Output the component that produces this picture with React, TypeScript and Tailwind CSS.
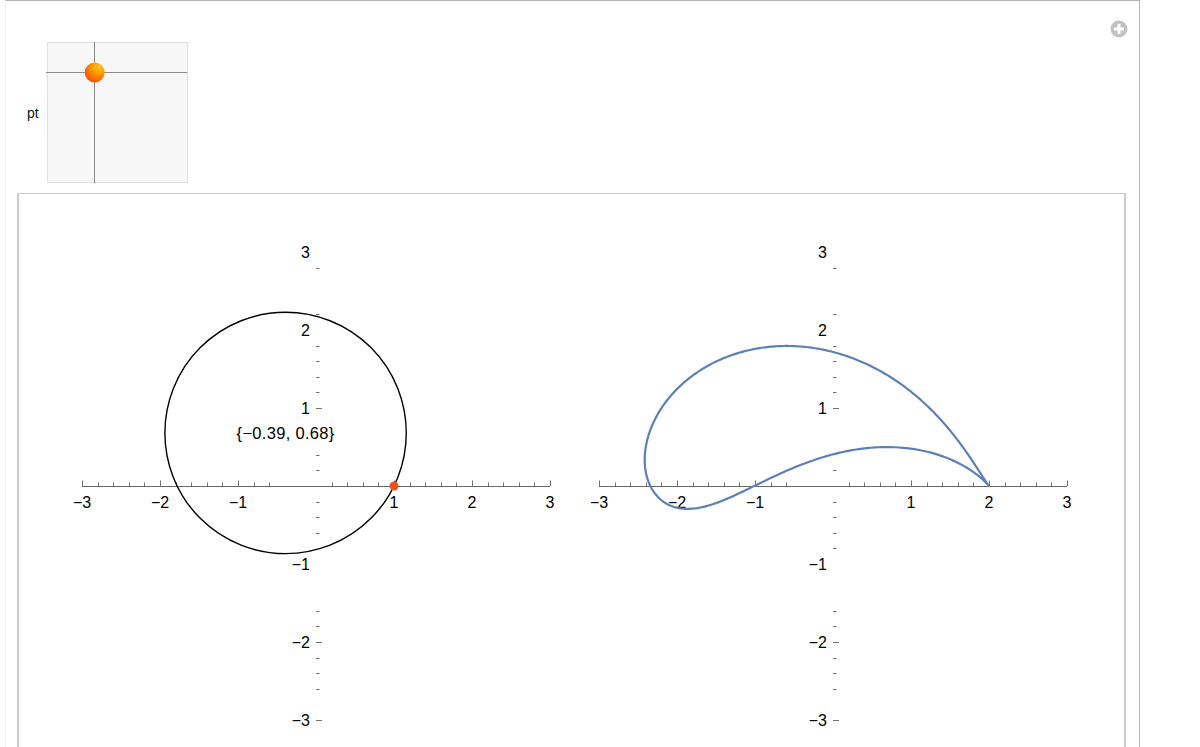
import React from 'react';

const U = 78;
const OX = 259;
const OY = 292;
const C = { x: -0.39, y: 0.68 };
const R = Math.hypot(1 - C.x, C.y);

const px = (x: number) => OX + U * x;
const py = (y: number) => OY - U * y;

const fmt = (n: number) => (n < 0 ? '\u2212' + Math.abs(n) : String(n));

const xTicks = Array.from({ length: 31 }, (_, i) => i - 15).filter(
  (i) => i !== 0 && i !== -1 && i !== -2
);
const leftYTicks = [14, 11, 9, 8, 7, 6, 5, 2, 1, -1, -2, -3, -8, -9, -10, -11, -12, -13, -15];
const rightYTicks = [14, 11, 9, 8, 7, 6, 5, 1, -1, -2, -3, -4, -8, -9, -10, -11, -12, -13, -15];
const labels = [-3, -2, -1, 1, 2, 3];

function joukowskiPath() {
  const pts: string[] = [];
  const n = 480;
  for (let k = 0; k <= n; k++) {
    const t = (k / n) * Math.PI * 2;
    const zx = C.x + R * Math.cos(t);
    const zy = C.y + R * Math.sin(t);
    const d = zx * zx + zy * zy;
    const wx = zx + zx / d;
    const wy = zy - zy / d;
    pts.push(`${k === 0 ? 'M' : 'L'}${px(wx).toFixed(2)},${py(wy).toFixed(2)}`);
  }
  return pts.join(' ');
}

const Axes: React.FC<{ yTicks: number[] }> = ({ yTicks }) => (
  <g fontFamily='"Liberation Sans", Arial, sans-serif' fontSize={16} fill="#000">
    <line x1={px(-3)} y1={OY + 0.5} x2={px(3)} y2={OY + 0.5} stroke="#666" strokeWidth={1} />
    {xTicks.map((i) => {
      const major = i % 5 === 0;
      const x = Math.round(px(i / 5)) + 0.5;
      return (
        <line key={'x' + i} x1={x} y1={OY} x2={x} y2={OY - (major ? 5.5 : 3.5)} stroke="#707070" strokeWidth={1} />
      );
    })}
    {yTicks.map((i) => {
      const major = i % 5 === 0;
      const y = Math.round(py(i / 5)) + 0.5;
      return (
        <line key={'y' + i} x1={OX} y1={y} x2={OX + (major ? 6 : 3.5)} y2={y} stroke="#707070" strokeWidth={1} />
      );
    })}
    {labels.map((v) => (
      <text key={'lx' + v} x={px(v)} y={OY + 22} textAnchor="middle">
        {fmt(v)}
      </text>
    ))}
    {labels.map((v) => (
      <text key={'ly' + v} x={OX - 6} y={py(v) + 6} textAnchor="end">
        {fmt(v)}
      </text>
    ))}
  </g>
);

const LeftPlot = () => (
  <svg width={517} height={553} className="block shrink-0">
    <Axes yTicks={leftYTicks} />
    <circle cx={px(C.x)} cy={py(C.y)} r={R * U} fill="none" stroke="#000" strokeWidth={1.4} />
    <text
      x={px(C.x)}
      y={py(C.y) + 6}
      textAnchor="middle"
      fontFamily='"Liberation Sans", Arial, sans-serif'
      fontSize={16.5}
      letterSpacing={0.3}
    >
      {'{\u22120.39, 0.68}'}
    </text>
    <circle cx={px(1)} cy={py(0)} r={4.5} fill="#e8561f" />
  </svg>
);

const RightPlot = () => (
  <svg width={517} height={553} className="block shrink-0">
    <Axes yTicks={rightYTicks} />
    <path d={joukowskiPath()} fill="none" stroke="#5e81b5" strokeWidth={2.2} strokeLinejoin="round" />
  </svg>
);

const Slider2D = () => (
  <div className="w-[141px] h-[141px] border border-[#e0e0e0] bg-[#f7f7f7]">
    <svg width={139} height={139} className="block overflow-visible">
      <defs>
        <radialGradient id="ball" cx="0.72" cy="0.22" r="0.95">
          <stop offset="0" stopColor="#ffbf1a" />
          <stop offset="0.35" stopColor="#ffa000" />
          <stop offset="0.6" stopColor="#ff7400" />
          <stop offset="1" stopColor="#f24a00" />
        </radialGradient>
      </defs>
      <line x1={46.5} y1={-1} x2={46.5} y2={140} stroke="#8c8c8c" strokeWidth={1} />
      <line x1={-2} y1={29.5} x2={139} y2={29.5} stroke="#8c8c8c" strokeWidth={1} />
      <circle cx={46.7} cy={29.5} r={10} fill="url(#ball)" />
    </svg>
  </div>
);

const PlusIcon = () => (
  <svg width={18} height={18} viewBox="0 0 18 18" className="block">
    <circle cx={9} cy={9} r={8.5} fill="#c2c2c2" />
    <rect x={4} y={7.5} width={10} height={3} fill="#fff" />
    <rect x={7.5} y={4} width={3} height={10} fill="#fff" />
  </svg>
);

export default function App() {
  return (
    <div className="h-[747px] w-[1200px] overflow-hidden bg-white">
      <div className="relative ml-[5px] w-[1135px] h-[760px] border-l border-t border-r border-l-[#f0f0f0] border-t-[#b4b4b4] border-r-[#b4b4b4]">
        <div className="absolute top-[19px] right-[11px]">
          <PlusIcon />
        </div>
        <div className="flex items-center pt-[41px] pl-[21px]">
          <span
            className="w-[20px] text-[14px] leading-none text-[#111]"
            style={{ fontFamily: '"Liberation Sans", Arial, sans-serif' }}
          >
            pt
          </span>
          <Slider2D />
        </div>
        <div className="mt-[10px] ml-[11px] w-[1109px] h-[600px] border-t border-l-2 border-r-2 border-[#cbcbcb] bg-white">
          <div className="flex pl-[38px]">
            <LeftPlot />
            <RightPlot />
          </div>
        </div>
      </div>
    </div>
  );
}
